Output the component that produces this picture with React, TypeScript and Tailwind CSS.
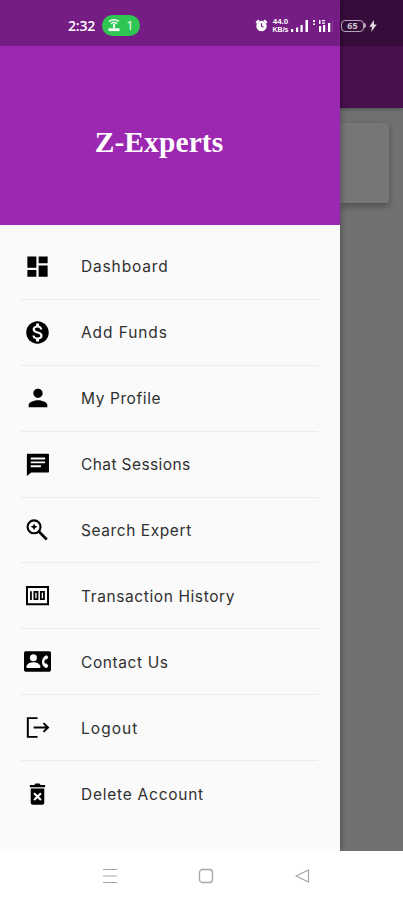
import React from "react";
import { MdDashboard, MdMonetizationOn, MdPerson } from "react-icons/md";

type IconProps = { className?: string };

const ChatIcon = ({ className }: IconProps) => (
    <svg viewBox="0 0 24 24" fill="currentColor" className={className}>
        <path
            fillRule="evenodd"
            d="M3 1.700h19.300q.7 0 .7.7V19q0 .7-.7.7H6L1.800 23V2.400q0-.7.7-.7zM5.500 5.200v1.900h13.800V5.200zM5.500 9v1.900h13.800V9zM5.500 12.800v1.900h9.800v-1.900z"
        />
    </svg>
);

const SearchIcon = ({ className }: IconProps) => (
    <svg viewBox="0 0 24 24" fill="none" stroke="currentColor" className={className}>
        <circle cx="8.700" cy="8.500" r="6.200" strokeWidth="2" />
        <path d="m13.300 13 7.600 7.600" strokeWidth="2.500" />
        <path d="M8.700 5.200 9.700 7.500 12 8.500 9.700 9.500 8.700 11.800 7.700 9.500 5.400 8.500 7.700 7.500z" fill="currentColor" stroke="none" />
    </svg>
);

const MoneyIcon = ({ className }: IconProps) => (
    <svg viewBox="0 0 24 24" fill="none" stroke="currentColor" className={className}>
        <path d="M1.900 3.900h20.200v16.600H1.900z" strokeWidth="1.900" />
        <path d="M5.700 7.800v8.400M9 8.600h3v6.800H9zM15.200 8.600h3v6.800h-3z" strokeWidth="1.700" />
    </svg>
);

const ContactIcon = ({ className }: IconProps) => (
    <svg viewBox="0 0 27 21" className={className}>
        <rect width="27" height="20.500" y=".2" rx="1.700" fill="currentColor" />
        <circle cx="9.400" cy="6.800" r="3.500" fill="#fafafa" />
        <path d="M2.500 17v-1.500c0-2.700 4.200-4.200 6.900-4.200s6.900 1.500 6.900 4.200V17z" fill="#fafafa" />
        <path
            d="M22.900 4.300 20.800 5c-3.800 3.500-3.800 8.500 0 11.500l2.100.6 1.500-2.300-1.800-2.200h-1.700q-1-2.100 0-4.200h1.700l1.800-2z"
            fill="#fafafa"
        />
    </svg>
);

const LogoutIcon = ({ className }: IconProps) => (
    <svg viewBox="0 0 24 24" fill="none" stroke="currentColor" strokeWidth="1.900" className={className}>
        <path d="M12 3H2.700v18H12M8.300 12h14M17.700 7.800l4.400 4.200-4.400 4.200" />
    </svg>
);

const TrashIcon = ({ className }: IconProps) => (
    <svg viewBox="0 0 24 24" className={className}>
        <path d="M4.700 2.900H9l1-1.400h4l1 1.400h4.300V5H4.700zM5.500 6.200h13V20q0 1.900-1.900 1.900H7.400q-1.900 0-1.900-1.900z" fill="currentColor" />
        <path d="m8.700 10.700 6.600 6.600M15.300 10.700l-6.600 6.600" stroke="#fafafa" strokeWidth="2" />
    </svg>
);

const menuItems = [
    { label: "Dashboard", icon: MdDashboard, size: "size-[27px]", tracking: "tracking-[0.85px]" },
    { label: "Add Funds", icon: MdMonetizationOn, size: "size-[27px]", tracking: "tracking-[0.9px]" },
    { label: "My Profile", icon: MdPerson, size: "size-[28px]", tracking: "tracking-[0.6px]" },
    { label: "Chat Sessions", icon: ChatIcon, size: "size-[25px]", tracking: "tracking-[0.4px]" },
    { label: "Search Expert", icon: SearchIcon, size: "size-[25px]", tracking: "tracking-[0.58px]" },
    { label: "Transaction History", icon: MoneyIcon, size: "size-[25px]", tracking: "tracking-[0.6px]" },
    { label: "Contact Us", icon: ContactIcon, size: "h-[21px] w-[27px]", tracking: "tracking-[0.6px]" },
    { label: "Logout", icon: LogoutIcon, size: "size-[25px]", tracking: "tracking-[1.05px]" },
    { label: "Delete Account", icon: TrashIcon, size: "size-[25px]", tracking: "tracking-[0.75px]" },
];

const StatusBar = () => (
    <div className="absolute inset-x-0 top-0 z-20 flex h-[46px] items-center bg-black/25 pt-[5px] pl-[68px] text-white">
        <span className="w-[34px] font-['Open_Sans',sans-serif] text-[14px] font-semibold tracking-[-0.2px]">2:32</span>
        <div className="flex h-[21px] w-[38px] items-center justify-center gap-[6px] rounded-full bg-[#2fc653]">
            <svg viewBox="0 0 12 13" className="h-[13px] w-3" fill="none" stroke="currentColor">
                <path d="M1 2.400q5-3.200 10 0M3 4.600q3-2 6 0" strokeWidth="1.500" />
                <path d="M6 5v4" strokeWidth="1.800" />
                <path d="M.500 10.700h11" strokeWidth="2.800" />
            </svg>
            <span className="font-['Open_Sans',sans-serif] text-[13px]">1</span>
        </div>

        {/* Alarm, network speed, signals, battery */}
        <div className="ml-[115px] flex items-center">
            <svg viewBox="0 0 14 14" className="size-[13px]" fill="currentColor">
                <circle cx="7" cy="7.600" r="5.600" />
                <path d="M.500 3.600 3.300.600 5 2 2 5zM13.500 3.600 10.700.600 9 2l3 3z" />
                <path d="M7 4.700v3l2 1.300" fill="none" stroke="#702080" strokeWidth="1.300" />
            </svg>
            <div className="ml-[3px] flex w-[19px] flex-col items-center font-['Liberation_Sans',sans-serif] font-bold">
                <span className="text-[8px] leading-[9px]">44.0</span>
                <span className="text-[7px] leading-[8px]">KB/s</span>
            </div>
            <svg viewBox="0 0 18 13" className="ml-[1px] h-[13px] w-[18px]" fill="currentColor">
                <path d="M0 10h2.200v3H0zM5 8.500h2.200V13H5zM9.500 6h2.200v7H9.500zM14.500 1h2.500v12h-2.500z" />
            </svg>
            <svg viewBox="0 0 20 13" className="ml-[4px] h-[13px] w-5" fill="currentColor">
                <path d="M0 1h2v2H0zM0 4.500h2v1.500H0zM6 1h1.500v4H6zM9 1h3v1.200H9zM9 3.500h3v1.200H9zM6 7h2.200v6H6zM10 6h2.200v7H10zM15 4h2.300v9H15z" />
                <path d="M19 1h1v12h-1z" opacity=".15" />
            </svg>
            <div className="ml-[8px] flex items-center text-[#cfc5d1]">
                <div className="flex h-[12px] w-[23px] items-center justify-center rounded-[4px] border border-[#b5a7b8] font-['Open_Sans',sans-serif] text-[9px] leading-none font-bold">
                    65
                </div>
                <div className="h-[5px] w-[2px] rounded-r bg-[#b5a7b8]" />
            </div>
            <svg viewBox="0 0 8 13" className="ml-[3px] h-[12px] w-2 text-[#e2dbe3]" fill="currentColor">
                <path d="M5 0 0 7.400h3l-1 5.600 6-8H5z" />
            </svg>
        </div>
    </div>
);

export default function App() {
    return (
        <div className="relative flex h-[900px] w-[403px] flex-col overflow-hidden bg-white">
            <StatusBar />

            <div className="flex h-[851px]">
                {/* Drawer */}
                <aside className="z-10 flex w-[340px] shrink-0 flex-col bg-[#fafafa] shadow-[0_0_7px_rgba(0,0,0,0.4)]">
                    <div className="flex h-[225px] items-center justify-center bg-[#9c27b0] pt-[59px] pr-[22px]">
                        <h1 className="font-['Liberation_Serif',serif] text-[29.5px] font-bold tracking-[0.1px] text-white">
                            Z-Experts
                        </h1>
                    </div>
                    <nav className="flex flex-col pt-[9px] pr-[22px] pl-[21px]">
                        {menuItems.map(({ label, icon: Icon, size, tracking }) => (
                            <div
                                key={label}
                                className="flex h-[65.9px] items-center border-b border-[#ebebeb] last:border-b-0"
                            >
                                <div className="flex w-[33px] justify-center">
                                    <Icon className={`${size} shrink-0 text-black`} />
                                </div>
                                <span
                                    className={`ml-[27px] pt-[1px] font-['Inter',sans-serif] text-[15.5px] whitespace-nowrap text-[#303030] ${tracking}`}
                                >
                                    {label}
                                </span>
                            </div>
                        ))}
                    </nav>
                </aside>

                {/* Dimmed page behind the drawer */}
                <div className="flex-1 bg-[#717171]">
                    <div className="h-[108px] bg-[#48104f] shadow-[0_1px_4px_rgba(0,0,0,0.35)]" />
                    <div className="mt-[15px] mr-[14px] h-[80px] rounded-r-[3px] bg-[#767676] shadow-[0_3px_7px_rgba(0,0,0,0.32)]" />
                </div>
            </div>

            {/* System navigation */}
            <div className="z-10 flex h-[49px] items-center gap-[80px] bg-white pl-[102px] text-[#a5a5a5]">
                <svg viewBox="0 0 16 16" className="size-4" fill="none" stroke="currentColor" strokeWidth="1.200">
                    <path d="M1 1.500h14M1 8h14M1 14.500h14" />
                </svg>
                <svg viewBox="0 0 16 16" className="size-4" fill="none" stroke="currentColor" strokeWidth="1.300">
                    <rect x="1.500" y="1.500" width="13" height="13" rx="3" />
                </svg>
                <svg viewBox="0 0 16 16" className="size-4" fill="none" stroke="currentColor" strokeWidth="1.200">
                    <path d="M2 8 14.500 2v12z" strokeLinejoin="round" />
                </svg>
            </div>
        </div>
    );
}
